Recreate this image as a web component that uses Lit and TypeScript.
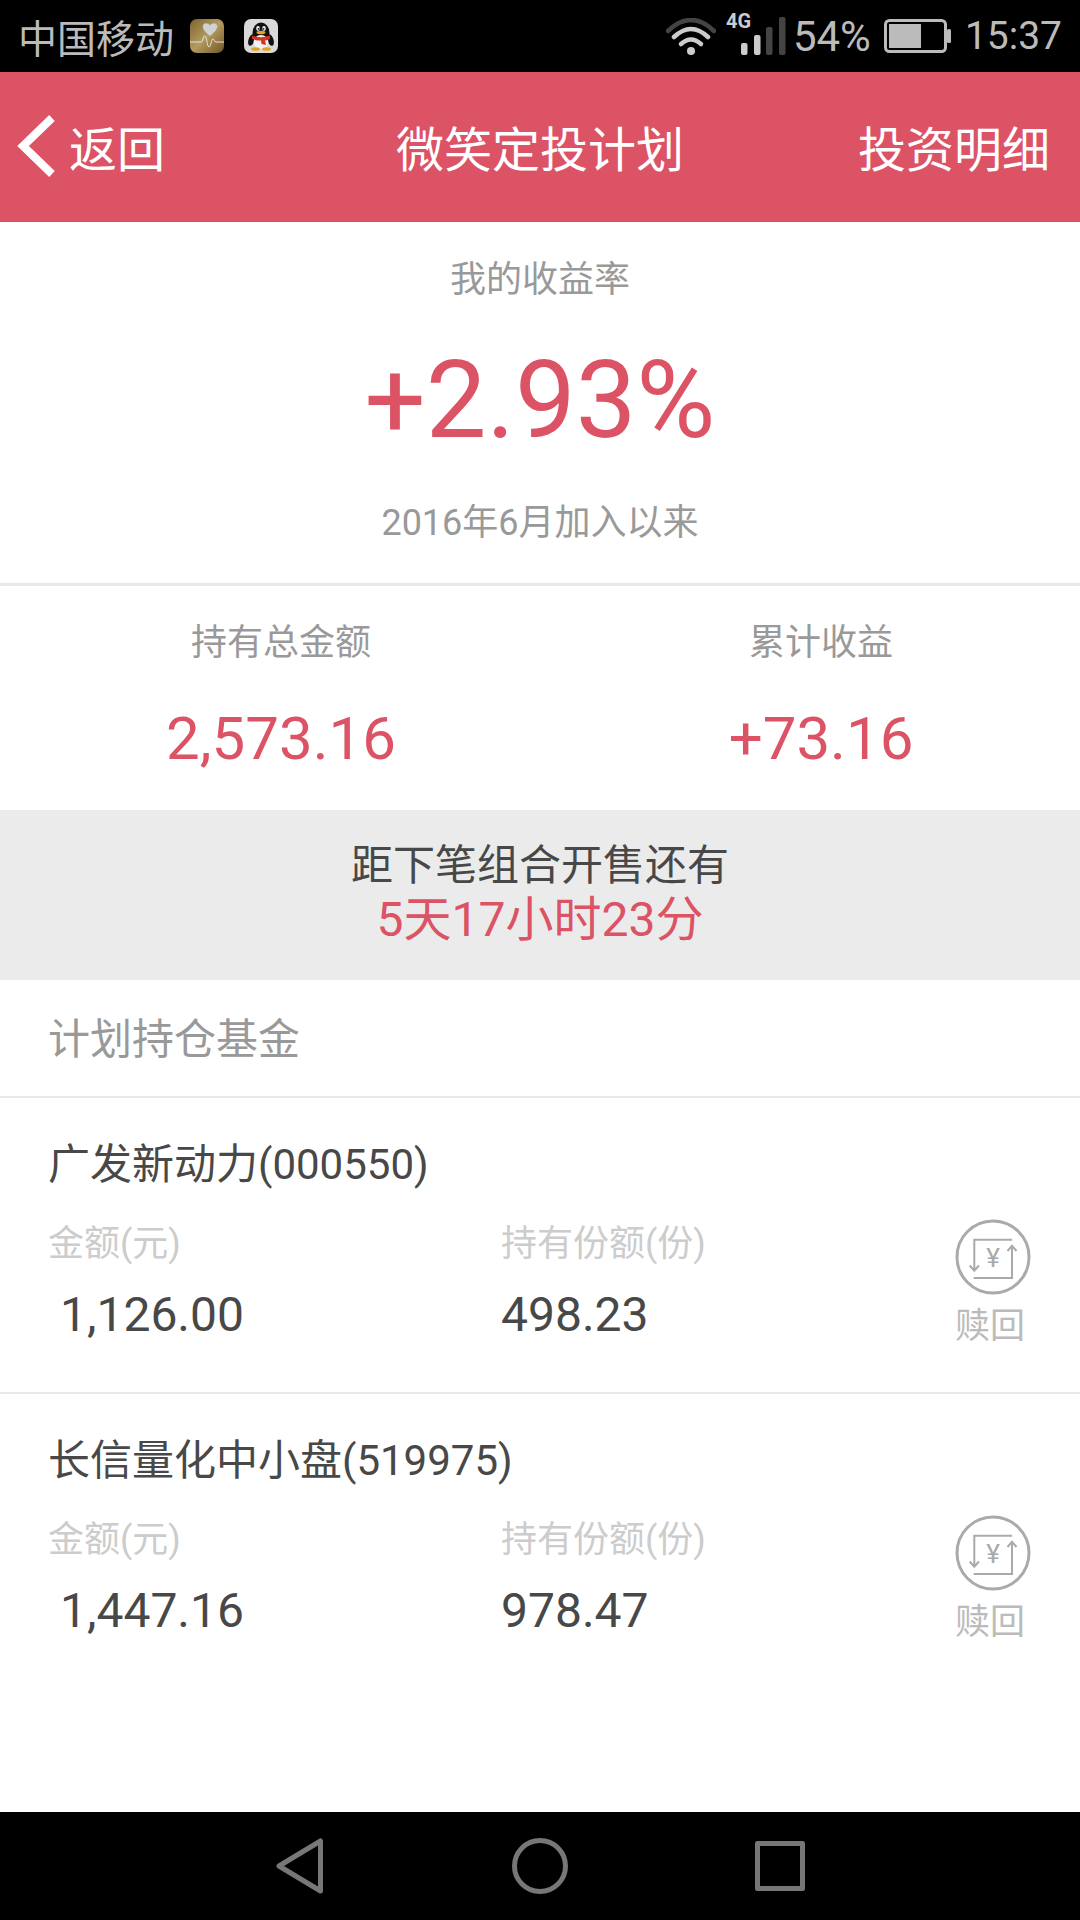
import {LitElement, css, html, svg} from 'lit';
import {customElement} from 'lit/decorators.js';

const funds = [
	{name: '广发新动力', code: '000550', amount: '1,126.00', shares: '498.23'},
	{name: '长信量化中小盘', code: '519975', amount: '1,447.16', shares: '978.47'},
];

const healthIcon = html`
	<svg class="notify" viewBox="0 0 34 34">
		<defs>
			<linearGradient id="gold" x1="0" y1="0" x2="1" y2="1">
				<stop offset="0" stop-color="#7d6430" />
				<stop offset="0.5" stop-color="#b39a5e" />
				<stop offset="1" stop-color="#6f5628" />
			</linearGradient>
		</defs>
		<rect width="34" height="34" rx="7" fill="url(#gold)" />
		<path d="M20 17 C14 12 12 9 13 6.500 C14 3.500 18 3.500 20 6.500 C22 3.500 26 3.500 27 6.500 C28 9 26 12 20 17Z" fill="#cdd2d4" />
		<path d="M0 23 H11 C13 23 13 17 15 17 C17 17 17 28 19 28 C21 28 21 20 23 20 C24.500 20 24 23 26 23 H34" fill="none" stroke="#e8e4d8" stroke-width="1" />
	</svg>
`;

const qqIcon = html`
	<svg class="notify" viewBox="0 0 34 34">
		<rect width="34" height="34" rx="7" fill="#d9d9d9" />
		<ellipse cx="7.500" cy="21" rx="3" ry="6" fill="#111" transform="rotate(18 7.500 21)" />
		<ellipse cx="26.500" cy="21" rx="3" ry="6" fill="#111" transform="rotate(-18 26.500 21)" />
		<ellipse cx="17" cy="14" rx="8.500" ry="10.500" fill="#111" />
		<ellipse cx="17" cy="23" rx="7.500" ry="7" fill="#f2f2f2" />
		<ellipse cx="14" cy="9.500" rx="1.800" ry="2.400" fill="#eee" />
		<ellipse cx="20" cy="9.500" rx="1.800" ry="2.400" fill="#eee" />
		<circle cx="14.500" cy="9.800" r="0.900" fill="#111" />
		<circle cx="19.500" cy="9.800" r="0.900" fill="#111" />
		<ellipse cx="17" cy="13.500" rx="4.500" ry="1.800" fill="#e8a020" />
		<path d="M8 16.500 Q17 20 26 16.500 L26 20 Q22 21.500 21 21.500 L22 26 L17.500 25 L17 21.500 Q12 21.500 8 20Z" fill="#d8311f" />
		<ellipse cx="11.500" cy="30" rx="4.500" ry="1.800" fill="#e3a32a" />
		<ellipse cx="22.500" cy="30" rx="4.500" ry="1.800" fill="#e3a32a" />
	</svg>
`;

const wifiIcon = html`
	<svg class="wifi" viewBox="0 0 50 37" fill="none" stroke-linecap="round" stroke-width="4.500">
		<path d="M2 13 Q25 -9 48 13" stroke="#444" />
		<path d="M8 19 Q25 3 42 19" stroke="#ccc" />
		<path d="M15 26 Q25 17 35 26" stroke="#ccc" />
		<circle cx="25" cy="33" r="4" fill="#ccc" stroke="none" />
	</svg>
`;

const signalIcon = html`
	<svg class="signal" viewBox="0 -6 60 48">
		<text x="0" y="14" font-family="Roboto, sans-serif" font-size="20" font-weight="700" fill="#ccc">4G</text>
		<rect x="15" y="29" width="6.500" height="12" rx="2" fill="#ccc" />
		<rect x="28" y="21" width="6.500" height="20" rx="2" fill="#ccc" />
		<rect x="40" y="13" width="6.500" height="28" rx="2" fill="#444" />
		<rect x="53" y="3" width="6.500" height="38" rx="2" fill="#444" />
	</svg>
`;

const batteryIcon = html`
	<svg class="battery" viewBox="0 0 67 34">
		<rect x="1.500" y="1.500" width="60" height="31" rx="4" fill="none" stroke="#bbb" stroke-width="3" />
		<rect x="5" y="5" width="32" height="24" fill="#bbb" />
		<rect x="63" y="10" width="4" height="14" rx="1.500" fill="#bbb" />
	</svg>
`;

const redeemIcon = svg`
	<circle cx="37" cy="37" r="36" fill="none" stroke="#aaa" stroke-width="3" />
	<path d="M56 19.700 H18.300 V50.500 M13.700 45.500 L18.300 50.700 L22.900 45.500" fill="none" stroke="#aaa" stroke-width="2" />
	<path d="M17.700 58 H56 V25.700 M51.500 31 L56 25.700 L60.500 31" fill="none" stroke="#aaa" stroke-width="2" />
	<text x="37" y="47" text-anchor="middle" font-family="Roboto, sans-serif" font-size="26" fill="#aaa">¥</text>
`;

@customElement('app-root')
export class AppRoot extends LitElement {
	render() {
		return html`
			<div class="status">
				<span class="carrier">中国移动</span>
				${healthIcon} ${qqIcon}
				<span class="spacer"></span>
				${wifiIcon} ${signalIcon}
				<span class="percent">54%</span>
				${batteryIcon}
				<span class="clock">15:37</span>
			</div>

			<header class="bar">
				<div class="back">
					<svg viewBox="0 0 38 62" fill="none" stroke="#fff" stroke-width="8">
						<path d="M35 3 L6 31 L35 59" />
					</svg>
					<span>返回</span>
				</div>
				<div class="title">微笑定投计划</div>
				<div class="detail">投资明细</div>
			</header>

			<section class="hero">
				<div class="label">我的收益率</div>
				<div class="rate">+2.93%</div>
				<div class="label since">2016年6月加入以来</div>
			</section>

			<section class="summary">
				<div class="cell left">
					<div class="label">持有总金额</div>
					<div class="money">2,573.16</div>
				</div>
				<div class="cell right">
					<div class="label">累计收益</div>
					<div class="money">+73.16</div>
				</div>
			</section>

			<section class="banner">
				<div class="line">距下笔组合开售还有</div>
				<div class="line red">5天17小时23分</div>
			</section>

			<div class="heading">计划持仓基金</div>

			<main class="list">
				${funds.map(
					(fund) => html`
						<div class="fund">
							<div class="name">${fund.name}(${fund.code})</div>
							<div class="row">
								<div class="col first">
									<div class="small">金额(元)</div>
									<div class="num indent">${fund.amount}</div>
								</div>
								<div class="col second">
									<div class="small">持有份额(份)</div>
									<div class="num">${fund.shares}</div>
								</div>
								<div class="action">
									<svg viewBox="-1 -1 76 76">${redeemIcon}</svg>
									<span>赎回</span>
								</div>
							</div>
						</div>
					`,
				)}
			</main>

			<nav class="nav">
				<div class="key">
					<svg class="tri" viewBox="0 0 48 56" fill="none" stroke="#777" stroke-width="5" stroke-linejoin="round">
						<path d="M44.500 3 V53 L3 28Z" />
					</svg>
				</div>
				<div class="key">
					<svg class="dot" viewBox="0 0 56 56" fill="none" stroke="#777" stroke-width="5">
						<circle cx="28" cy="28" r="25.500" />
					</svg>
				</div>
				<div class="key">
					<svg class="box" viewBox="0 0 50 50" fill="none" stroke="#777" stroke-width="5" stroke-linejoin="round">
						<rect x="2.500" y="2.500" width="45" height="45" />
					</svg>
				</div>
			</nav>
		`;
	}

	static styles = css`
		:host {
			display: flex;
			flex-direction: column;
			width: 1080px;
			height: 1920px;
			background: #fff;
			font-family: Roboto, 'Noto Sans CJK SC', sans-serif;
			overflow: hidden;
		}

		.status {
			box-sizing: border-box;
			height: 72px;
			background: #000;
			color: #bbb;
			display: flex;
			align-items: center;
			padding: 0 18px;
		}

		.carrier {
			font-size: 39px;
			width: 172px;
		}

		.notify {
			width: 34px;
			height: 34px;
			margin-right: 20px;
		}

		.spacer {
			flex: 1;
		}

		.wifi {
			width: 50px;
			height: 37px;
			margin-right: 10px;
		}

		.signal {
			width: 60px;
			height: 48px;
			margin-top: -8px;
		}

		.percent {
			font-size: 42px;
			margin-left: 7px;
		}

		.battery {
			width: 67px;
			height: 34px;
			margin-left: 13px;
		}

		.clock {
			font-size: 39px;
			margin-left: 14px;
		}

		.bar {
			box-sizing: border-box;
			height: 150px;
			padding: 0 30px 2px;
			background: #db5365;
			color: #fff;
			display: grid;
			grid-template-columns: 1fr auto 1fr;
			align-items: center;
			font-size: 48px;
		}

		.back {
			display: flex;
			align-items: center;
			gap: 14px;
			margin-left: -13px;
		}

		.back svg {
			width: 38px;
			height: 62px;
		}

		.detail {
			text-align: right;
		}

		.hero {
			box-sizing: border-box;
			height: 364px;
			padding-top: 33px;
			text-align: center;
			border-bottom: 3px solid #e8e8e8;
		}

		.label {
			font-size: 36px;
			line-height: 50px;
			color: #999;
		}

		.rate {
			font-size: 108px;
			line-height: 120px;
			margin-top: 35px;
			color: #db5365;
		}

		.since {
			margin-top: 38px;
		}

		.summary {
			box-sizing: border-box;
			height: 224px;
			padding-top: 32px;
			display: flex;
			text-align: center;
		}

		.left {
			width: 562px;
		}

		.right {
			width: 518px;
		}

		.money {
			font-size: 60px;
			line-height: 70px;
			margin-top: 36px;
			color: #db5365;
		}

		.banner {
			box-sizing: border-box;
			height: 170px;
			padding-top: 29px;
			background: #ebebeb;
			text-align: center;
			font-size: 42px;
			color: #484848;
		}

		.line {
			line-height: 54px;
		}

		.red {
			font-size: 48px;
			color: #db5365;
		}

		.heading {
			box-sizing: border-box;
			height: 118px;
			padding: 30px 0 0 48px;
			font-size: 42px;
			line-height: 60px;
			color: #999;
			border-bottom: 2px solid #e8e8e8;
		}

		.list {
			flex: 1;
		}

		.fund {
			box-sizing: border-box;
			height: 296px;
			padding: 39px 49px 0 48px;
			border-bottom: 2px solid #e8e8e8;
		}

		.fund:last-child {
			border-bottom: none;
		}

		.name {
			font-size: 42px;
			line-height: 56px;
			color: #484848;
		}

		.row {
			display: flex;
			margin-top: 28px;
		}

		.first {
			width: 453px;
		}

		.second {
			flex: 1;
		}

		.small {
			font-size: 36px;
			line-height: 46px;
			color: #ccc;
		}

		.num {
			font-size: 48px;
			line-height: 60px;
			margin-top: 18px;
			color: #484848;
		}

		.indent {
			padding-left: 12px;
		}

		.action {
			width: 76px;
			margin-top: -2px;
			display: flex;
			flex-direction: column;
			align-items: center;
			font-size: 35px;
			line-height: 40px;
			color: #bbb;
		}

		.action svg {
			width: 76px;
			height: 76px;
			flex: none;
		}

		.action span {
			margin: 12px 0 0 -6px;
			white-space: nowrap;
		}

		.nav {
			box-sizing: border-box;
			height: 108px;
			background: #000;
			display: flex;
			justify-content: center;
		}

		.key {
			width: 240px;
			display: flex;
			align-items: center;
			justify-content: center;
		}

		.tri {
			width: 48px;
			height: 56px;
		}

		.dot {
			width: 56px;
			height: 56px;
		}

		.box {
			width: 50px;
			height: 50px;
		}
	`;
}

declare global {
	interface HTMLElementTagNameMap {
		'app-root': AppRoot;
	}
}
